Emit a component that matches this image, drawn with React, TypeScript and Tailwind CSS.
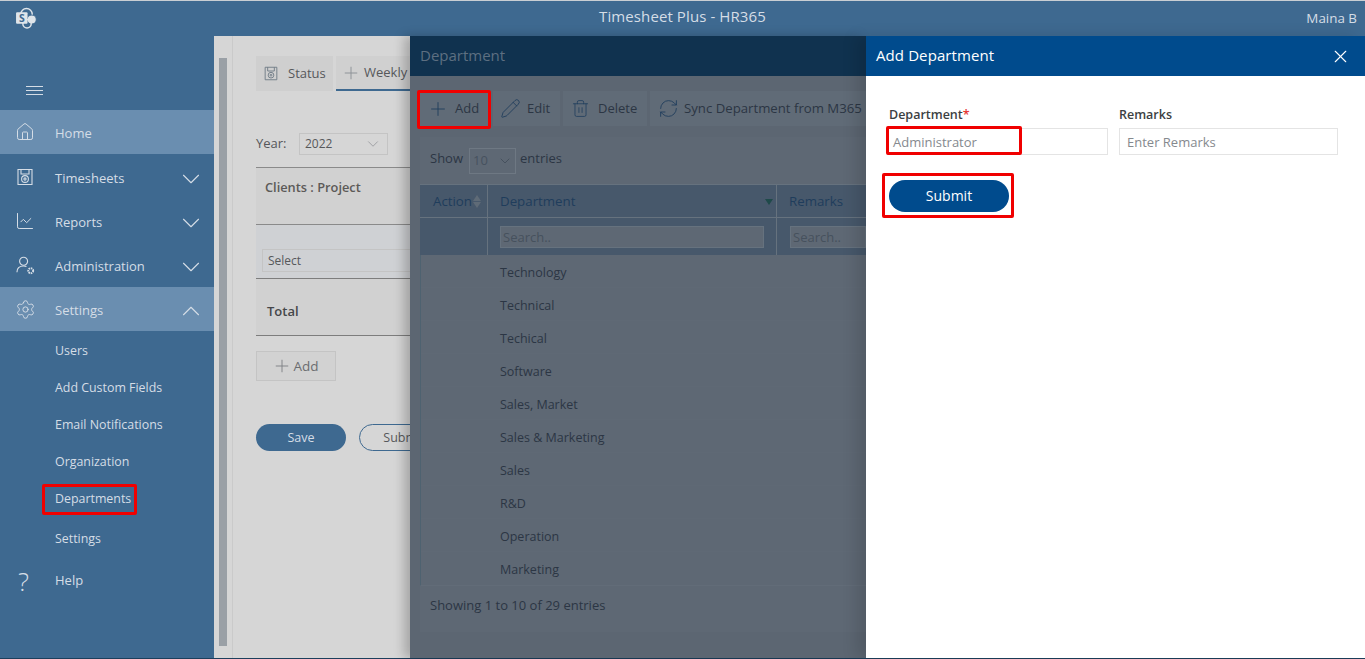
import React from "react";
import {
  ChartLine,
  ChevronDown,
  ChevronUp,
  House,
  Plus,
  RefreshCw,
  Settings,
  Trash2,
  Pencil,
  X,
} from "lucide-react";

const ClockSave: React.FC<{ className?: string }> = ({ className }) => (
  <svg viewBox="0 0 16 18" fill="none" stroke="currentColor" strokeWidth="1.1" className={className}>
    <path d="M1 1.5h14v15H1z" />
    <path d="M4 1.5v4.5h8V1.5" />
    <circle cx="8" cy="11" r="3.4" />
    <circle cx="8" cy="11" r="1.1" />
  </svg>
);

const UserGear: React.FC<{ className?: string }> = ({ className }) => (
  <svg viewBox="0 0 20 20" fill="none" stroke="currentColor" strokeWidth="1.2" className={className}>
    <circle cx="8" cy="5.5" r="4.2" />
    <path d="M1 17c0-4 2.5-6.5 7-6.5 1.2 0 2.2.2 3 .5" />
    <circle cx="15.5" cy="15.5" r="2.6" strokeWidth="2" strokeDasharray="1.6 .8" />
  </svg>
);

const SharePointLogo: React.FC = () => (
  <svg viewBox="0 0 22 22" className="w-[23px] h-[23px]">
    <circle cx="11" cy="7" r="5.5" fill="none" stroke="#dfe5ea" strokeWidth="1.4" />
    <circle cx="16" cy="12" r="4.4" fill="#dfe5ea" stroke="#3e6990" strokeWidth="1" />
    <circle cx="11.5" cy="16" r="4" fill="none" stroke="#dfe5ea" strokeWidth="1.4" />
    <rect x="1" y="5" width="11" height="11" rx="1" fill="#dfe5ea" />
    <text x="6.5" y="14" textAnchor="middle" fontSize="10" fontWeight="700" fill="#3e6990" fontFamily="Open Sans, sans-serif">
      S
    </text>
  </svg>
);

const mainNav = [
  { label: "Home", icon: <House className="w-[20px] h-[20px] -ml-[1px]" strokeWidth={1.2} />, rowClass: "h-[44px] bg-[#6a8eb0]" },
  { label: "Timesheets", icon: <ClockSave className="w-[16px] h-[18px] ml-[1px]" />, rowClass: "h-[44px] pt-[2px]", chevron: true },
  { label: "Reports", icon: <ChartLine className="w-[20px] h-[20px] -ml-[1px]" strokeWidth={1.2} />, rowClass: "h-[44px] pt-[2px]", chevron: true },
  { label: "Administration", icon: <UserGear className="w-[19px] h-[19px]" />, rowClass: "h-[45px] pt-[2px]", chevron: true },
];

const subNav = [
  { label: "Users", rowClass: "h-[37px]" },
  { label: "Add Custom Fields", rowClass: "h-[37px]" },
  { label: "Email Notifications", rowClass: "h-[37px]" },
  { label: "Organization", rowClass: "h-[37px]" },
  { label: "Departments", rowClass: "h-[37px]" },
  { label: "Settings", rowClass: "h-[43px] pl-[1px]" },
];

const departments = [
  "Technology",
  "Technical",
  "Techical",
  "Software",
  "Sales, Market",
  "Sales & Marketing",
  "Sales",
  "R&D",
  "Operation",
  "Marketing",
];

const Sidebar: React.FC = () => (
  <aside className="w-[214px] shrink-0 bg-[#3e6990] text-[#d5dde6] text-[13px]">
    <div className="h-[74px] pl-[26px] pt-[50px]">
      <div className="w-[17px] h-[9px] border-y border-[#d5dde6] relative">
        <div className="absolute top-[3px] left-0 w-full h-px bg-[#d5dde6]" />
      </div>
    </div>
    {mainNav.map((item) => (
      <div key={item.label} className={`flex items-center ${item.rowClass}`}>
        <div className="w-[55px] pl-[16px] shrink-0 flex">{item.icon}</div>
        <span className="flex-1 pt-[3px]">{item.label}</span>
        {item.chevron && <ChevronDown className="w-[30px] h-[30px] mr-[8px] mt-[3px]" strokeWidth={0.9} />}
      </div>
    ))}
    <div className="h-[44px] flex items-center bg-[#6a8eb0]">
      <div className="w-[55px] pl-[16px] shrink-0 flex">
        <Settings className="w-[21px] h-[21px] -ml-[1px]" strokeWidth={1.1} />
      </div>
      <span className="flex-1 pt-[3px]">Settings</span>
      <ChevronUp className="w-[30px] h-[30px] mr-[8px] mt-[3px]" strokeWidth={0.9} />
    </div>
    <div className="text-[12.4px] pt-[2px]">
      {subNav.map((item) => (
        <div key={item.label} className={`flex items-center pl-[55px] ${item.rowClass}`}>
          {item.label}
        </div>
      ))}
    </div>
    <div className="h-[39px] flex items-center">
      <div className="w-[55px] pl-[18px] text-[26px] font-light leading-none">?</div>
      <span>Help</span>
    </div>
  </aside>
);

const BackgroundPage: React.FC = () => (
  <div className="flex-1 bg-[#d6d6d6] flex min-w-0 text-[13px] text-[#56585b]">
    <div className="w-[19px] shrink-0 border-r border-[#cacaca] pt-[22px] pb-[12px] pl-[5px]">
      <div className="w-[8px] h-full bg-[#9aa0a6]" />
    </div>
    <div className="flex-1 pl-[23px] pt-[20px] min-w-0">
      <div className="flex gap-[3px] h-[35px]">
        <div className="w-[77px] bg-[#cfcfcf] flex items-center gap-[10px] pl-[8px]">
          <ClockSave className="w-[14px] h-[15px] text-[#6f7b86]" />
          <span>Status</span>
        </div>
        <div className="w-[74px] bg-[#d0d0d0] border-b-2 border-[#3e6990] flex items-center gap-[3px] pl-[5px] overflow-hidden">
          <Plus className="w-[20px] h-[20px] text-[#8a8f95] shrink-0" strokeWidth={1.1} />
          <span>Weekly</span>
        </div>
      </div>
      <div className="flex items-center h-[22px] mt-[42px]">
        <span className="w-[43px] text-[#55575a]">Year:</span>
        <div className="w-[89px] h-[22px] border border-[#c4c4c4] flex items-center justify-between px-[5px] text-[12px]">
          2022
          <ChevronDown className="w-[18px] h-[18px] text-[#8f9296]" strokeWidth={1} />
        </div>
      </div>
      <div className="mt-[12px] border-t border-[#8a8a8a] h-[57px] bg-[#d1d1d1] pl-[9px] pt-[10px] font-semibold text-[12.8px] text-[#5c5a58]">
        Clients : Project
      </div>
      <div className="border-t border-[#8a8a8a] h-[54px] bg-[#cfd1d4] pl-[6px] pt-[24px]">
        <div className="h-[23px] border border-[#c4c4c4] text-[12px] flex items-center pl-[5px]">Select</div>
      </div>
      <div className="border-y border-[#7d7d7d] h-[58px] bg-[#d1d1d1] flex items-center pl-[11px] pt-[10px] font-semibold text-[13px] text-[#45474a]">
        Total
      </div>
      <div className="mt-[15px] w-[80px] h-[30px] border border-[#c4c4c4] bg-[#d2d2d2] flex items-center justify-center gap-[1px] text-[13.5px] text-[#6b6d70]">
        <Plus className="w-[20px] h-[20px] -ml-[1px] text-[#7d8084]" strokeWidth={1.1} />
        <span className="pt-[1px]">Add</span>
      </div>
      <div className="flex gap-[13px] mt-[43px] text-[12.5px]">
        <div className="w-[90px] h-[27px] rounded-full bg-[#3e6990] text-[#d5dde6] flex items-center justify-center pt-[1px]">Save</div>
        <div className="w-[90px] h-[27px] rounded-full border border-[#3e6990] text-[#56585b] flex items-center justify-center pt-[1px]">
          Submit
        </div>
      </div>
    </div>
  </div>
);

const ToolButton: React.FC<{ icon: React.ReactNode; label: string; className: string }> = ({ icon, label, className }) => (
  <div className={`h-[35px] bg-[#606b77] flex items-center shrink-0 ${className}`}>
    {icon}
    <span>{label}</span>
  </div>
);

const DepartmentPanel: React.FC = () => (
  <div className="w-[456px] bg-[#5c6672] shadow-[-6px_0_10px_rgba(0,0,0,0.22)] text-[#2c3644] text-[13px] overflow-hidden">
    <div className="h-[40px] bg-[#10324f] flex items-center pl-[10px] pb-[2px] text-[15px] text-[#5d6f81]">Department</div>
    <div className="flex gap-[3px] pl-[10px] mt-[15px] h-[35px] whitespace-nowrap">
      <ToolButton
        label="Add"
        className="w-[70px] gap-[6px] pl-[7px]"
        icon={<Plus className="w-[22px] h-[22px] text-[#1f3d5c]" strokeWidth={1} />}
      />
      <ToolButton
        label="Edit"
        className="w-[67px] gap-[6px] pl-[7px]"
        icon={<Pencil className="w-[21px] h-[21px] text-[#1f3d5c]" strokeWidth={1} />}
      />
      <ToolButton
        label="Delete"
        className="w-[84px] gap-[8px] pl-[8px]"
        icon={<Trash2 className="w-[19px] h-[19px] text-[#1f3d5c]" strokeWidth={1} />}
      />
      <ToolButton
        label="Sync Department from M365"
        className="w-[220px] gap-[5px] pl-[8px] text-[13.2px]"
        icon={<RefreshCw className="w-[21px] h-[21px] text-[#1f3d5c]" strokeWidth={1} />}
      />
    </div>
    <div className="ml-[10px] mt-[11px] bg-[#5e6874]">
      <div className="h-[47px] flex items-center pl-[10px] pb-[4px]">
        Show
        <div className="w-[47px] h-[26px] mt-[4px] ml-[6px] mr-[4px] border border-[#6e7883] flex items-center justify-between pl-[3px] pr-[2px] text-[#47525f]">
          10
          <ChevronDown className="w-[16px] h-[16px] text-[#3b4653]" strokeWidth={1} />
        </div>
        entries
      </div>
      <div className="flex h-[34px] bg-[#47586b] border-y border-[#66727e] text-[#1f3d5c] text-[13.3px]">
        <div className="w-[68px] border-r border-[#66727e] flex items-center pl-[13px] pt-[1px]">
          Action
          <span className="flex flex-col ml-[1px]">
            <span className="w-0 h-0 border-x-[4px] border-x-transparent border-b-[6px] border-b-[#5f6b77] mb-[1px]" />
            <span className="w-0 h-0 border-x-[4px] border-x-transparent border-t-[6px] border-t-[#5f6b77]" />
          </span>
        </div>
        <div className="w-[289px] border-r border-[#66727e] flex items-center justify-between pl-[12px] pr-[3px] pt-[1px]">
          Department
          <span className="w-0 h-0 border-x-[4px] border-x-transparent border-t-[6px] border-t-[#1f4a4a]" />
        </div>
        <div className="flex-1 flex items-center pl-[12px] pt-[1px]">Remarks</div>
      </div>
      <div className="flex h-[37px] bg-[#47586b] text-[#46515d] text-[13px]">
        <div className="w-[68px] border-r border-[#66727e]" />
        <div className="w-[289px] border-r border-[#66727e] flex items-center pl-[12px] pr-[12px]">
          <div className="w-full h-[22px] bg-[#5e6874] border border-[#66727e] flex items-center pl-[2px] pt-[2px]">Search..</div>
        </div>
        <div className="flex-1 flex items-center pl-[13px]">
          <div className="w-full h-[22px] bg-[#5e6874] border border-[#66727e] flex items-center pl-[2px] pt-[2px]">Search..</div>
        </div>
      </div>
      <div className="border-l border-[#4e6270] border-b border-b-[#626c78]">
        {departments.map((name) => (
          <div key={name} className="h-[33px] flex items-center pl-[79px] pt-[5px] text-[12.5px] border-b border-[#5f6975] last:border-b-0 last:pt-[4px]">
            {name}
          </div>
        ))}
      </div>
      <div className="h-[46px] flex items-center pl-[10px] pb-[6px]">Showing 1 to 10 of 29 entries</div>
    </div>
  </div>
);

const AddPanel: React.FC = () => (
  <div className="flex-1 bg-white text-[#43484e] shadow-[-10px_0_14px_rgba(0,0,0,0.12)]">
    <div className="h-[40px] bg-[#004b8d] flex items-center justify-between pl-[10px] pr-[14px] text-white text-[15px]">
      <span className="pb-[1px] tracking-[0.1px]">Add Department</span>
      <X className="w-[21px] h-[21px]" strokeWidth={1.3} />
    </div>
    <div className="pl-[21px] pt-[30px] pr-[27px]">
      <div className="flex gap-[11px]">
        <div className="w-[221px]">
          <div className="pl-[2px] font-semibold text-[12.5px] leading-[17px] text-[#3c3f43]">
            Department<span className="text-[#e53935]">*</span>
          </div>
          <div className="mt-[5px] h-[27px] border border-[#e4e4e4] flex items-center pl-[5px] pt-[2px] text-[13px] text-[#85898e]">Administrator</div>
        </div>
        <div className="flex-1">
          <div className="font-semibold text-[12.5px] leading-[17px] text-[#3c3f43]">Remarks</div>
          <div className="mt-[5px] h-[27px] border border-[#e4e4e4] flex items-center pl-[7px] pt-[2px] text-[13px] text-[#85898e]">Enter Remarks</div>
        </div>
      </div>
      <button
        type="button"
        className="ml-[2px] mt-[25px] w-[120px] h-[32px] rounded-full bg-[#004b8d] text-white text-[14px] flex items-center justify-center pb-[1px]"
      >
        Submit
      </button>
    </div>
  </div>
);

export default function App() {
  return (
    <div className="relative h-[659px] overflow-hidden bg-[#3e6990] font-['Open_Sans',sans-serif]">
      <div className="h-[36px] border-t border-[#c9ced3] bg-[#3e6990] flex items-center justify-between text-[#d5dde6] relative">
        <div className="pl-[15px] flex">
          <SharePointLogo />
        </div>
        <div className="absolute left-0 right-0 top-[3px] text-center text-[15px] leading-[24px] tracking-[0.1px]">Timesheet Plus - HR365</div>
        <div className="pr-[8px] text-[13.4px]">Maina B</div>
      </div>
      <div className="flex h-[622px]">
        <Sidebar />
        <BackgroundPage />
      </div>
      <div className="h-px bg-[#1c3f5c]" />

      {/* slide-in panels */}
      <div className="absolute left-[410px] right-0 top-[36px] bottom-[1px] flex">
        <DepartmentPanel />
        <AddPanel />
      </div>

      {/* red callouts from the doc screenshot */}
      <div className="absolute left-[42px] top-[484px] w-[95px] h-[31px] border-[3px] border-[#f00000] rounded-[2px]" />
      <div className="absolute left-[417px] top-[90px] w-[74px] h-[39px] border-[3px] border-[#f00000] rounded-[2px]" />
      <div className="absolute left-[886px] top-[126px] w-[136px] h-[29px] border-[3px] border-[#f00000] rounded-[2px]" />
      <div className="absolute left-[882px] top-[173px] w-[132px] h-[45px] border-[3px] border-[#f00000] rounded-[2px]" />
    </div>
  );
}
